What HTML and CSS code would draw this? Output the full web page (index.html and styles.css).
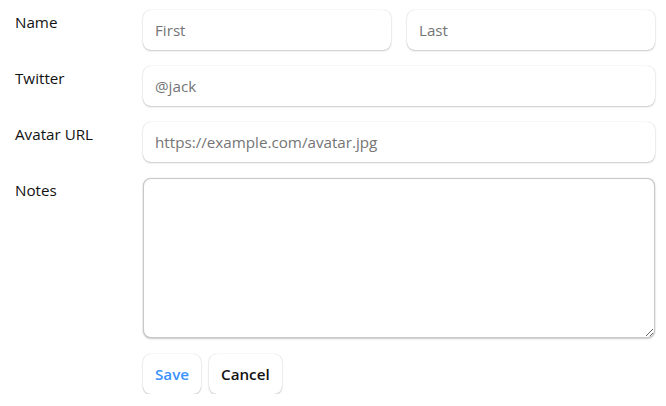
FILE: index.html
```html
<!DOCTYPE html>
<html>
<head>
<meta charset="utf-8">
<link rel="stylesheet" href="styles.css">
</head>
<body>
<form class="contact-form">
  <div class="row">
    <span class="label">Name</span>
    <input class="field first" type="text" placeholder="First">
    <input class="field" type="text" placeholder="Last">
  </div>
  <label class="row">
    <span class="label">Twitter</span>
    <input class="field" type="text" placeholder="@jack">
  </label>
  <label class="row">
    <span class="label">Avatar URL</span>
    <input class="field" type="text" placeholder="https://example.com/avatar.jpg">
  </label>
  <label class="row">
    <span class="label">Notes</span>
    <textarea class="notes" rows="6"></textarea>
  </label>
  <div class="actions">
    <button type="submit" class="btn save">Save</button>
    <button type="button" class="btn cancel">Cancel</button>
  </div>
</form>
</body>
</html>
```
FILE: styles.css
```css
html {
  font-family: "Open Sans", "Noto Sans", sans-serif;
  color: #121212;
}
body {
  margin: 0;
  padding: 10px 11px 0 15px;
  background: #ffffff;
}
.contact-form {
  display: flex;
  flex-direction: column;
  gap: 16px;
  width: 640px;
}
.row {
  display: flex;
  line-height: 24px;
  font-size: 15.2px;
}
.label {
  width: 128px;
  flex-shrink: 0;
}
.field, .btn {
  font-size: 15.2px;
  font-family: inherit;
  border: none;
  border-radius: 8px;
  padding: 8px 12px;
  box-shadow: 0 0 1px hsla(0, 0%, 0%, 0.2), 0 1px 2px hsla(0, 0%, 0%, 0.2);
  background-color: #fff;
  line-height: 24px;
  margin: 0;
  color: #121212;
}
.field {
  flex-grow: 2;
  min-width: 0;
  width: 0;
}
.field::placeholder {
  color: #757575;
}
.first {
  margin-right: 16px;
}
.notes {
  flex-grow: 2;
  width: 0;
  font-size: 15.2px;
  font-family: inherit;
  line-height: 24px;
  padding: 8px 12px;
  border: 1px solid #c8c8c8;
  border-radius: 8px;
  box-shadow: 0 0 1px hsla(0, 0%, 0%, 0.2), 0 1px 2px hsla(0, 0%, 0%, 0.2);
  margin: 0;
  height: 160px;
  box-sizing: border-box;
}
.actions {
  display: flex;
  gap: 8px;
  margin-left: 128px;
}
.btn {
  font-weight: 600;
  cursor: pointer;
}
.save {
  color: #3992ff;
}
.cancel {
  color: #121212;
}
```
